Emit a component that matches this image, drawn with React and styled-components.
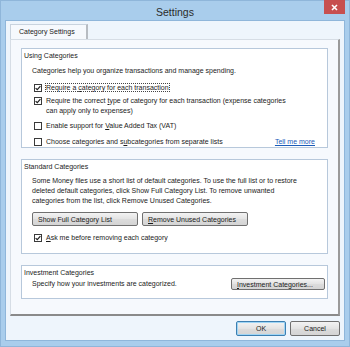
import React from 'react';
import styled, { createGlobalStyle } from 'styled-components';

const GlobalStyle = createGlobalStyle`
  html, body {
    margin: 0;
    padding: 0;
    background: #a9cdec;
  }
  * {
    box-sizing: border-box;
  }
`;

const Window = styled.div`
  width: 350px;
  height: 347px;
  display: flex;
  flex-direction: column;
  background: #a9cdec;
  border: 1px solid #8fb6da;
  font-family: "Liberation Sans", Arial, sans-serif;
  color: #1b1b1b;
`;

const TitleBar = styled.div`
  height: 21px;
  display: flex;
  align-items: flex-start;
  padding-left: 25px;
  padding-right: 4px;
`;

const Title = styled.div`
  flex: 1;
  text-align: center;
  font-size: 10.5px;
  color: #2b2b2b;
  padding-top: 5px;
`;

const CloseButton = styled.div`
  width: 21px;
  height: 14px;
  margin-top: -1px;
  background: #c74f4f;
  display: flex;
  align-items: center;
  justify-content: center;
`;

const Client = styled.div`
  flex: 1;
  margin: 0 4px 5px;
  background: #eef5fc;
  border: 1px solid #8fb6da;
  padding: 3px 4px 4px;
  display: flex;
  flex-direction: column;
`;

const TabStrip = styled.div`
  display: flex;
  height: 15px;
`;

const Tab = styled.div`
  width: 78px;
  height: 15px;
  background: #f6f9fd;
  border: 1px solid #c9d3de;
  border-bottom: none;
  border-right: 2px solid #b7bcc2;
  font-size: 7px;
  padding: 3px 0 0 8px;
`;

const Panel = styled.div`
  height: 277px;
  background: #f6f9fd;
  border: 1px solid #d6dde5;
  border-right: 2px solid #9a9a9a;
  border-bottom: 2px solid #8a8a8a;
  padding: 8px 10px 0 10px;
  display: flex;
  flex-direction: column;
  gap: 11px;
`;

const Group = styled.div`
  background: #ffffff;
  border: 1px solid #b7c8db;
  height: ${p => p.h}px;
  padding: 2px 0 0 2px;
  font-size: 7px;
`;

const GroupTitle = styled.div`
  height: 10px;
  line-height: 10px;
`;

const Body = styled.div`
  padding-left: 8px;
  padding-right: ${p => p.pr ?? 6}px;
  display: flex;
  flex-direction: column;
`;

const Text = styled.div`
  flex: ${p => p.grow ? 1 : 'none'};
  line-height: 10px;
  margin-top: ${p => p.mt || 0}px;
`;

const CheckRow = styled.div`
  display: flex;
  align-items: flex-start;
  gap: 4px;
  margin-top: ${p => p.mt || 0}px;
  margin-left: 2px;
`;

const Box = styled.span`
  flex: none;
  width: 8px;
  height: 8px;
  margin-top: 1px;
  border: 1px solid #3a3a3a;
  background: #fff;
  display: flex;
  align-items: center;
  justify-content: center;
`;

const Label = styled.span`
  flex: 1;
  line-height: 10px;
`;

const Focus = styled.span`
  outline: 1px dotted #444;
`;

const Link = styled.span`
  float: right;
  color: #1a5bb8;
  text-decoration: underline;
  margin-right: 6px;
`;

const ButtonRow = styled.div`
  display: flex;
  align-items: center;
  gap: 4px;
  margin-top: ${p => p.mt || 0}px;
  justify-content: ${p => p.end ? 'flex-end' : 'flex-start'};
`;

const Button = styled.div`
  flex: none;
  width: ${p => p.w}px;
  height: ${p => p.h || 13}px;
  border: 1px solid ${p => p.primary ? '#3c7fb1' : '#707070'};
  border-radius: 2px;
  background: linear-gradient(#f3f3f3, #e3e3e3 50%, #dcdcdc 50%, #d4d4d4);
  box-shadow: ${p => p.primary ? 'inset 0 0 0 1px #9fd5f5' : 'none'};
  font-size: 7px;
  display: flex;
  align-items: center;
  justify-content: ${p => p.left ? 'flex-start' : 'center'};
  padding-left: ${p => p.left ? 5 : 0}px;
`;

const Check = () => (
  <svg width="6" height="6" viewBox="0 0 6 6">
    <path d="M0.6 3.1 L2.3 4.7 L5.4 1.2" fill="none" stroke="#1f1f1f" strokeWidth="1.2" />
  </svg>
);

const CheckBox = ({ checked, mt, children }) => (
  <CheckRow mt={mt}>
    <Box>{checked && <Check />}</Box>
    <Label>{children}</Label>
  </CheckRow>
);

export default function App() {
  return (
    <>
      <GlobalStyle />
      <Window>
        <TitleBar>
          <Title>Settings</Title>
          <CloseButton>
            <svg width="7" height="7" viewBox="0 0 7 7">
              <path d="M1 1 L6 6 M6 1 L1 6" stroke="#fff" strokeWidth="1.6" />
            </svg>
          </CloseButton>
        </TitleBar>
        <Client>
          <TabStrip>
            <Tab>Category Settings</Tab>
          </TabStrip>
          <Panel>
            <Group h={100}>
              <GroupTitle>Using Categories</GroupTitle>
              <Body>
                <Text mt={5}>Categories help you organize transactions and manage spending.</Text>
                <CheckBox checked mt={7}>
                  <Focus>Require a <u>c</u>ategory for each transaction</Focus>
                </CheckBox>
                <CheckBox checked mt={3}>
                  Require the correct <u>t</u>ype of category for each transaction (expense categories<br />
                  can apply only to expenses)
                </CheckBox>
                <CheckBox mt={5}>
                  Enable support for <u>V</u>alue Added Tax (VAT)
                </CheckBox>
                <CheckBox mt={6}>
                  <Link>Tell me more</Link>
                  Choose categories and s<u>u</u>bcategories from separate lists
                </CheckBox>
              </Body>
            </Group>
            <Group h={95}>
              <GroupTitle>Standard Categories</GroupTitle>
              <Body>
                <Text mt={4}>
                  Some Money files use a short list of default categories. To use the full list or to restore<br />
                  deleted default categories, click Show Full Category List. To remove unwanted<br />
                  categories from the list, click Remove Unused Categories.
                </Text>
                <ButtonRow mt={6}>
                  <Button w={106} h={14} left>Show Full Cate<u>g</u>ory List</Button>
                  <Button w={106} h={14} left><u>R</u>emove Unused Categories</Button>
                </ButtonRow>
                <CheckBox checked mt={7}>
                  <u>A</u>sk me before removing each category
                </CheckBox>
              </Body>
            </Group>
            <Group h={34}>
              <GroupTitle>Investment Categories</GroupTitle>
              <Body pr={2}>
                <ButtonRow end>
                  <Text grow>Specify how your investments are categorized.</Text>
                  <Button w={94} h={12} left><u>I</u>nvestment Categories...</Button>
                </ButtonRow>
              </Body>
            </Group>
          </Panel>
          <ButtonRow end mt={5}>
            <Button w={50} h={15} primary>OK</Button>
            <Button w={50} h={15}>Cancel</Button>
          </ButtonRow>
        </Client>
      </Window>
    </>
  );
}
